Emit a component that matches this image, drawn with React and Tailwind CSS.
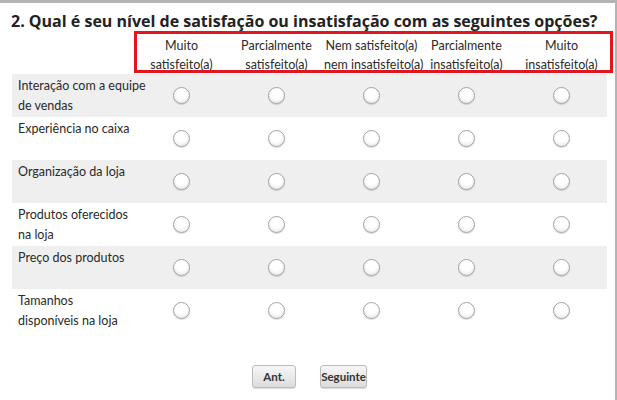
import React from 'react';

const columns = [
  ['Muito', 'satisfeito(a)'],
  ['Parcialmente', 'satisfeito(a)'],
  ['Nem satisfeito(a)', 'nem insatisfeito(a)'],
  ['Parcialmente', 'insatisfeito(a)'],
  ['Muito', 'insatisfeito(a)'],
];

const rows = [
  ['Interação com a equipe', 'de vendas'],
  ['Experiência no caixa'],
  ['Organização da loja'],
  ['Produtos oferecidos', 'na loja'],
  ['Preço dos produtos'],
  ['Tamanhos', 'disponíveis na loja'],
];

const Radio = () => (
  <div className="w-[17px] h-[17px] rounded-full border border-[#a3a3a3] bg-[radial-gradient(circle_at_50%_35%,#ffffff_45%,#dedede_100%)] shadow-[0_1px_1px_rgba(0,0,0,0.15)]" />
);

const App = () => {
  return (
    <div
      className="w-[617px] h-[400px] bg-white border-t-[3px] border-r-[2px] border-[#b3b3b3] overflow-hidden text-[#333]"
      style={{ fontFamily: 'Lato, "Open Sans", sans-serif' }}
    >
      {/* Title */}
      <h1
        className="pl-[11px] pt-[8px] text-[16px] leading-[20px] font-bold text-[#222] whitespace-nowrap"
        style={{ fontFamily: '"Open Sans", sans-serif' }}
      >
        2. Qual é seu nível de satisfação ou insatisfação com as seguintes opções?
      </h1>

      {/* Matrix */}
      <div className="ml-[12px] w-[595px]">
        {/* Header */}
        <div className="relative grid grid-cols-[122px_repeat(5,95px)] h-[43px] pt-[5px]">
          <div />
          {columns.map((c, i) => (
            <div key={i} className="text-center text-[12.5px] leading-[19px] whitespace-nowrap text-[#2a2a2a]">
              <div>{c[0]}</div>
              <div>{c[1]}</div>
            </div>
          ))}
          <div className="absolute left-[122px] top-0 w-[479px] h-[42px] border-[3px] border-[#e3161f]" />
        </div>

        {/* Rows */}
        {rows.map((r, i) => (
          <div
            key={i}
            className={`grid grid-cols-[122px_repeat(5,95px)] h-[43px] ${i % 2 === 0 ? 'bg-[#efefef]' : 'bg-white'}`}
          >
            <div className="pl-[6px] pt-[2px] text-[12.5px] leading-[20px] whitespace-nowrap text-[#2a2a2a]">
              {r.map((l, j) => (
                <div key={j}>{l}</div>
              ))}
            </div>
            {columns.map((_, j) => (
              <div key={j} className="flex items-center justify-center">
                <Radio />
              </div>
            ))}
          </div>
        ))}
      </div>

      {/* Buttons */}
      <div className="flex justify-center gap-[24px] mt-[33px] pl-[4px]">
        <button className="w-[44px] h-[23px] rounded-[3px] border border-[#bcbcbc] bg-gradient-to-b from-[#f7f7f7] to-[#dcdcdc] text-[11.5px] font-bold text-[#333] shadow-[0_1px_1px_rgba(0,0,0,0.15)]">
          Ant.
        </button>
        <button className="w-[47px] h-[23px] rounded-[3px] border border-[#bcbcbc] bg-gradient-to-b from-[#f7f7f7] to-[#dcdcdc] text-[11.5px] font-bold text-[#333] shadow-[0_1px_1px_rgba(0,0,0,0.15)]">
          Seguinte
        </button>
      </div>
    </div>
  );
};

export default App;
